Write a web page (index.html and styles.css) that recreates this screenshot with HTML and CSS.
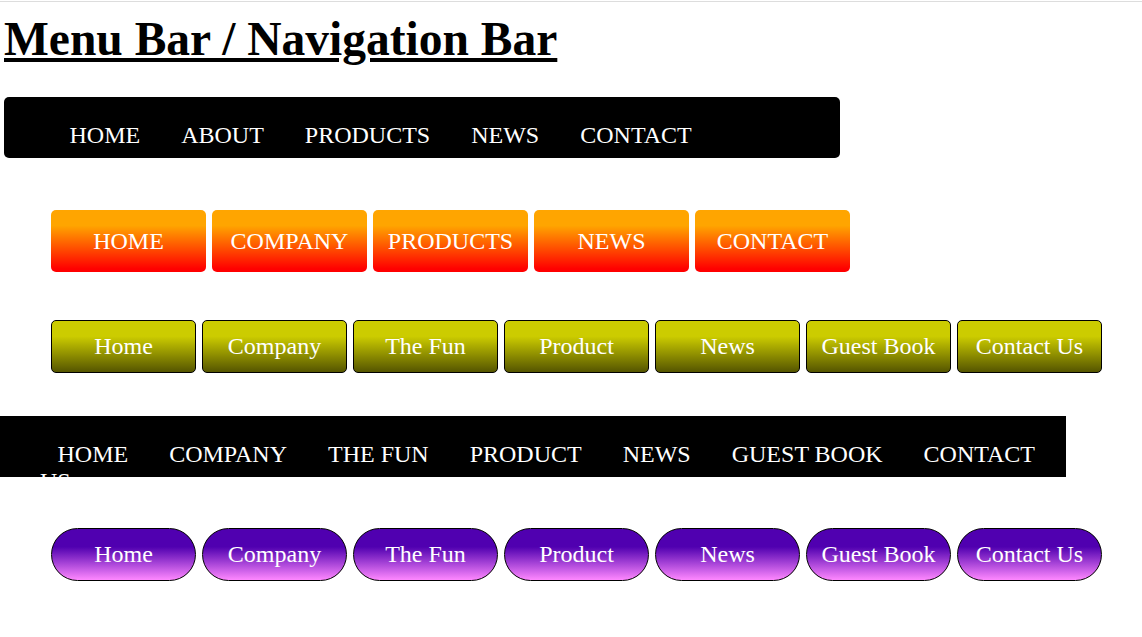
FILE: index.html
```html
<!DOCTYPE html>
<html>
<head>
<meta charset="utf-8">
<title>Menu Bar / Navigation Bar</title>
<link rel="stylesheet" href="styles.css">
</head>
<body>
<div class="topline"></div>
<h1 class="title">Menu Bar / Navigation Bar</h1>

<nav class="bar bar-rounded">
  <a class="bar-item" href="#">HOME</a>
  <a class="bar-item" href="#">ABOUT</a>
  <a class="bar-item" href="#">PRODUCTS</a>
  <a class="bar-item" href="#">NEWS</a>
  <a class="bar-item" href="#">CONTACT</a>
</nav>

<nav class="row row-orange">
  <a class="btn btn-orange" href="#">HOME</a>
  <a class="btn btn-orange" href="#">COMPANY</a>
  <a class="btn btn-orange" href="#">PRODUCTS</a>
  <a class="btn btn-orange" href="#">NEWS</a>
  <a class="btn btn-orange" href="#">CONTACT</a>
</nav>

<nav class="row row-olive">
  <a class="btn btn-olive" href="#">Home</a>
  <a class="btn btn-olive" href="#">Company</a>
  <a class="btn btn-olive" href="#">The Fun</a>
  <a class="btn btn-olive" href="#">Product</a>
  <a class="btn btn-olive" href="#">News</a>
  <a class="btn btn-olive" href="#">Guest Book</a>
  <a class="btn btn-olive" href="#">Contact Us</a>
</nav>

<nav class="bar bar-wide">
  <a class="bar-item" href="#">HOME</a>
  <a class="bar-item" href="#">COMPANY</a>
  <a class="bar-item" href="#">THE FUN</a>
  <a class="bar-item" href="#">PRODUCT</a>
  <a class="bar-item" href="#">NEWS</a>
  <a class="bar-item" href="#">GUEST BOOK</a>
  <a class="bar-item" href="#">CONTACT US</a>
</nav>

<nav class="row row-purple">
  <a class="btn btn-purple" href="#">Home</a>
  <a class="btn btn-purple" href="#">Company</a>
  <a class="btn btn-purple" href="#">The Fun</a>
  <a class="btn btn-purple" href="#">Product</a>
  <a class="btn btn-purple" href="#">News</a>
  <a class="btn btn-purple" href="#">Guest Book</a>
  <a class="btn btn-purple" href="#">Contact Us</a>
</nav>
</body>
</html>
```
FILE: styles.css
```css
html, body {
  margin: 0;
  padding: 0;
  background: #fff;
}
body {
  font-family: "Liberation Serif", "Times New Roman", serif;
  color: #000;
}
.topline {
  margin-top: 1px;
  height: 1px;
  background: #dddddd;
}
.title {
  margin: 10px 0 0 4px;
  font-size: 47.5px;
  font-weight: bold;
  text-decoration: underline;
  line-height: 55px;
}

/* black bars with inline items */
.bar {
  box-sizing: border-box;
  height: 61px;
  overflow: hidden;
  background: #000;
  padding-top: 25px;
  font-size: 24px;
}
.bar-item {
  color: #fff;
  text-decoration: none;
  padding: 0 17.5px;
}
.bar-rounded {
  margin: 30px 0 0 4px;
  width: 836px;
  padding-left: 48px;
  border-radius: 5px;
}
.bar-wide {
  margin-top: 43px;
  width: 1066px;
  padding-left: 40px;
}

/* button rows */
.row {
  display: flex;
  gap: 6px;
  margin-left: 51px;
}
.btn {
  box-sizing: border-box;
  display: flex;
  align-items: center;
  justify-content: center;
  color: #fff;
  text-decoration: none;
  font-size: 24px;
}
.row-orange {
  margin-top: 52px;
}
.btn-orange {
  width: 155px;
  height: 62px;
  border-radius: 5px;
  background: linear-gradient(#ffa500 25%, #ff0000 95%);
}
.row-olive {
  margin-top: 48px;
}
.btn-olive {
  width: 145px;
  height: 53px;
  border: 1px solid #000;
  border-radius: 5px;
  background: linear-gradient(#cccc00 30%, #555500 100%);
}
.row-purple {
  margin-top: 51px;
}
.btn-purple {
  width: 145px;
  height: 53px;
  border: 1px solid #000;
  border-radius: 27px;
  background: linear-gradient(#5000b0 35%, #ff88ff 100%);
}
```
